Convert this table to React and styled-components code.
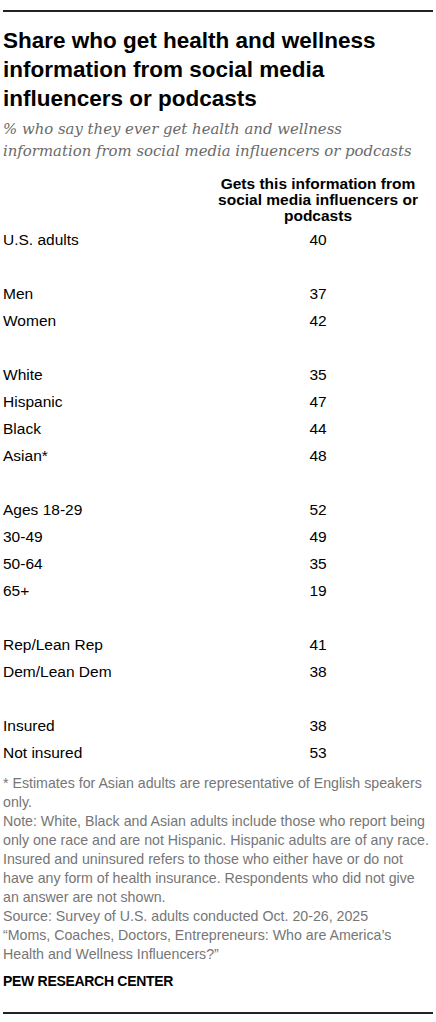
import { createGlobalStyle, styled } from 'styled-components';

const GlobalStyle = createGlobalStyle`
  body {
    margin: 0;
    background: #fff;
    font-family: "Liberation Sans", Arial, sans-serif;
    color: #000;
  }
`;

const groups = [
  [['U.S. adults', 40]],
  [['Men', 37], ['Women', 42]],
  [['White', 35], ['Hispanic', 47], ['Black', 44], ['Asian*', 48]],
  [['Ages 18-29', 52], ['30-49', 49], ['50-64', 35], ['65+', 19]],
  [['Rep/Lean Rep', 41], ['Dem/Lean Dem', 38]],
  [['Insured', 38], ['Not insured', 53]],
];

const App = () => (
  <Page>
    <GlobalStyle />
    <Rule $top="10px" />
    <Title>
      Share who get health and wellness information from social media influencers or podcasts
    </Title>
    <Subtitle>
      % who say they ever get health and wellness information from social media influencers or podcasts
    </Subtitle>
    <Table>
      <HeaderRow>
        <span />
        <ColHead>Gets this information from social media influencers or podcasts</ColHead>
      </HeaderRow>
      {groups.map((g, i) => (
        <Group key={i} $first={i === 0}>
          {g.map(([label, value]) => (
            <Row key={label}>
              <Label>{label}</Label>
              <Value>{value}</Value>
            </Row>
          ))}
        </Group>
      ))}
    </Table>
    <Notes>
      <p>* Estimates for Asian adults are representative of English speakers only.</p>
      <p>
        Note: White, Black and Asian adults include those who report being only one race and are not
        Hispanic. Hispanic adults are of any race. Insured and uninsured refers to those who either have
        or do not have any form of health insurance. Respondents who did not give an answer are not shown.
      </p>
      <p>Source: Survey of U.S. adults conducted Oct. 20-26, 2025</p>
      <p>“Moms, Coaches, Doctors, Entrepreneurs: Who are America’s Health and Wellness Influencers?”</p>
    </Notes>
    <Brand>PEW RESEARCH CENTER</Brand>
    <Rule $top="21px" />
  </Page>
);

const Page = styled.div`
  width: 436px;
  padding: 0 3px;
  box-sizing: border-box;
`;

const Rule = styled.div`
  margin-top: ${p => p.$top};
  border-top: 2px solid #222;
`;

const Title = styled.h1`
  margin: 14px 0 0;
  font-size: 22.5px;
  line-height: 29px;
  font-weight: 900;
  padding-right: 40px;
`;

const Subtitle = styled.div`
  margin-top: 5px;
  font-family: "DejaVu Serif", Georgia, serif;
  font-style: italic;
  font-size: 14.9px;
  line-height: 22px;
  color: #6a6a6a;
  padding-right: 14px;
`;

const Table = styled.div`
  margin-top: 14px;
`;

const Cols = styled.div`
  display: grid;
  grid-template-columns: 1fr 206px;
  padding-right: 12px;
`;

const HeaderRow = styled(Cols)`
  align-items: end;
`;

const ColHead = styled.div`
  text-align: center;
  font-weight: 700;
  font-size: 15.5px;
  line-height: 16px;
`;

const Group = styled.div`
  margin-top: ${p => (p.$first ? '2px' : '27px')};
`;

const Row = styled(Cols)`
  height: 27px;
  align-items: center;
  font-size: 15.5px;
`;

const Label = styled.div``;

const Value = styled.div`
  text-align: center;
`;

const Notes = styled.div`
  margin-top: 8px;
  font-size: 14.2px;
  line-height: 19px;
  color: #767676;

  p {
    margin: 0;
  }
`;

const Brand = styled.div`
  margin-top: 8px;
  font-size: 14px;
  line-height: 19px;
  font-weight: 700;
  letter-spacing: -0.3px;
`;

export default App;
